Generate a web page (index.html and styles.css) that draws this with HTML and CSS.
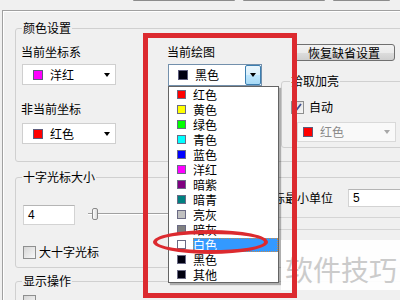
FILE: index.html
```html
<!DOCTYPE html>
<html lang="zh-CN">
<head>
  <meta charset="UTF-8">
  <meta name="viewport" content="width=device-width, initial-scale=1">
  <title>颜色设置</title>
  <link rel="stylesheet" href="styles.css">
</head>
<body>

  <div class="tabs">
    <span class="tab tab-a"></span>
    <span class="tab tab-b"></span>
    <span class="tab tab-c"></span>
  </div>

  <div class="page">
    <fieldset class="group group-color">
      <legend>颜色设置</legend>
      <div class="color-cols">

        <div class="col col-axis">
          <div class="label">当前坐标系</div>
          <div class="combo">
            <span class="swatch c-magenta"></span><span class="combo-text">洋红</span><span class="arrow"></span>
          </div>
          <div class="label label-second">非当前坐标</div>
          <div class="combo combo-second">
            <span class="swatch c-red"></span><span class="combo-text">红色</span><span class="arrow"></span>
          </div>
        </div>

        <div class="col col-draw">
          <div class="label">当前绘图</div>
          <div class="combo-wrap">
            <div class="combo combo-open">
              <span class="swatch c-black"></span><span class="combo-text">黑色</span>
              <span class="drop-btn"><span class="arrow"></span></span>
            </div>
            <ul class="drop-list">
              <li><span class="swatch c-red"></span><span class="item-text">红色</span></li>
              <li><span class="swatch c-yellow"></span><span class="item-text">黄色</span></li>
              <li><span class="swatch c-green"></span><span class="item-text">绿色</span></li>
              <li><span class="swatch c-cyan"></span><span class="item-text">青色</span></li>
              <li><span class="swatch c-blue"></span><span class="item-text">蓝色</span></li>
              <li><span class="swatch c-magenta"></span><span class="item-text">洋红</span></li>
              <li><span class="swatch c-purple"></span><span class="item-text">暗紫</span></li>
              <li><span class="swatch c-teal"></span><span class="item-text">暗青</span></li>
              <li><span class="swatch c-silver"></span><span class="item-text">亮灰</span></li>
              <li><span class="swatch c-gray"></span><span class="item-text">暗灰</span></li>
              <li class="selected"><span class="swatch c-white"></span><span class="item-text">白色</span></li>
              <li><span class="swatch c-black"></span><span class="item-text">黑色</span></li>
              <li><span class="swatch c-black"></span><span class="item-text">其他</span></li>
            </ul>
          </div>
        </div>

        <div class="col col-pick">
          <button class="btn" type="button">恢复缺省设置</button>
          <fieldset class="group group-pick">
            <legend>拾取加亮</legend>
            <div class="check-row">
              <span class="check">
                <svg width="11" height="11" viewBox="0 0 11 11"><path d="M2 5.5 L4.5 8 L9 2" fill="none" stroke="#3d4f8f" stroke-width="1.8"/></svg>
              </span>
              <span>自动</span>
            </div>
            <div class="combo combo-disabled">
              <span class="swatch c-red"></span><span class="combo-text">红色</span><span class="arrow"></span>
            </div>
          </fieldset>
        </div>

      </div>
    </fieldset>

    <fieldset class="group group-cross">
      <legend>十字光标大小</legend>
      <div class="cross-cols">
        <div class="cross-left">
          <div class="size-row">
            <div class="edit">4</div>
            <div class="slider"><span class="track"></span><span class="thumb"></span></div>
          </div>
          <div class="check-row check-big">
            <span class="check"></span>
            <span>大十字光标</span>
          </div>
        </div>
        <div class="cross-right">
          <div class="unit-row">
            <span class="unit-label">光标最小单位</span>
            <div class="edit edit-unit">5</div>
          </div>
          <div class="rule rule-a"></div>
          <div class="rule rule-b"></div>
        </div>
      </div>
    </fieldset>

    <fieldset class="group group-show">
      <legend>显示操作</legend>
      <div class="check-row check-show">
        <span class="check"></span>
      </div>
    </fieldset>
  </div>

  <!-- 标注 -->
  <div class="mark-rect"></div>
  <div class="mark-ellipse"></div>
  <div class="watermark">软件技巧</div>

</body>
</html>
```

FILE: styles.css
```css
body {
  margin: 0;
  width: 400px;
  height: 300px;
  overflow: hidden;
  position: relative;
  background: #f0f0f0;
  color: #000;
  font: 12px/14px "Noto Sans CJK SC", "Liberation Sans", sans-serif;
}

/* 顶部标签页边缘 */
.tabs {
  display: flex;
  height: 10px;
}

.tab {
  height: 1px;
  background: #8c8c8c;
  border-radius: 0 0 2px 2px;
}

.tab-a { margin-left: 133px; width: 102px; }
.tab-b { margin-left: 8px; width: 82px; }
.tab-c { margin-left: 8px; width: 57px; }

.page {
  margin-left: 2px;
  padding-left: 12px;
  border-left: 1px solid #a0a0a0;
  border-top: 1px solid #a0a0a0;
  box-shadow: inset 1px 1px 0 #fff;
  height: 289px;
  overflow: hidden;
}

.group {
  margin: 0;
  padding: 0 0 0 6px;
  border: 1px solid #d0d0d0;
  border-radius: 3px;
  min-width: 0;
  width: 420px;
}

.group legend {
  padding: 0 1px;
  line-height: 14px;
}

.group-color {
  margin-top: 10px;
  padding-bottom: 13px;
}

.color-cols {
  display: flex;
  align-items: flex-start;
}

.col-axis {
  width: 94px;
}

.col-draw {
  width: 94px;
  margin-left: 52px;
}

.col-pick {
  margin-left: 19px;
  width: 160px;
}

.label {
  margin-top: 10px;
  margin-left: -1px;
}

.label-second {
  margin-top: 17px;
}

/* 下拉框 */
.combo {
  display: flex;
  align-items: center;
  box-sizing: border-box;
  height: 21px;
  margin-top: 5px;
  padding-left: 10px;
  background: #fff;
  border: 1px solid #cfcfcf;
}

.combo-second {
  margin-top: 7px;
}

.combo-text {
  margin-left: 7px;
}

.arrow {
  margin-left: auto;
  margin-right: 5px;
  width: 0;
  height: 0;
  border-left: 3px solid transparent;
  border-right: 3px solid transparent;
  border-top: 4px solid #000;
}

.swatch {
  box-sizing: border-box;
  width: 10px;
  height: 10px;
  border: 1px solid #5c5c7c;
  flex-shrink: 0;
}

.c-red { background: #ff0000; }
.c-yellow { background: #ffff00; }
.c-green { background: #00ff00; }
.c-cyan { background: #00ffff; }
.c-blue { background: #0000ff; }
.c-magenta { background: #ff00ff; }
.c-purple { background: #800080; }
.c-teal { background: #008080; }
.c-silver { background: #c0c0c0; }
.c-gray { background: #808080; }
.c-white { background: #ffffff; }
.c-black { background: #000010; }

.combo-wrap {
  position: relative;
  margin-top: 5px;
}

.combo-open {
  height: 22px;
  margin-top: 0;
  padding-left: 9px;
  border-color: #7390ac;
}

.drop-btn {
  display: flex;
  align-items: center;
  justify-content: center;
  box-sizing: border-box;
  width: 16px;
  height: 20px;
  margin-left: auto;
  border: 1px solid #3c7fb1;
  border-radius: 2px;
  background: linear-gradient(#eaf6fd, #d9f0fc 50%, #bee6fd 51%, #a7d9f5);
}

.drop-btn .arrow {
  margin: 0;
}

.drop-list {
  position: absolute;
  z-index: 5;
  top: 22px;
  left: 0;
  box-sizing: border-box;
  width: 111px;
  margin: 0;
  padding: 0;
  list-style: none;
  background: #fff;
  border: 1px solid #646464;
  box-shadow: 2px 2px 1px rgba(0, 0, 0, 0.28);
}

.drop-list li {
  display: flex;
  align-items: center;
  height: 15px;
  padding-left: 8px;
}

.drop-list .swatch {
  width: 9px;
  height: 9px;
  border-color: #6b6b85;
}

.item-text {
  flex: 1;
  margin-left: 7px;
  line-height: 14px;
}

.selected .item-text {
  background: #3399ff;
  color: #fff;
  outline: 1px dotted #c98a4a;
  outline-offset: -1px;
}

/* 右侧 */
.btn {
  display: block;
  box-sizing: border-box;
  width: 102px;
  height: 17px;
  margin: 9px 0 0 12px;
  padding: 0;
  font: inherit;
  line-height: 15px;
  color: #000;
  border: 1px solid #707070;
  border-radius: 3px;
  background: linear-gradient(#f2f2f2, #ebebeb 50%, #dddddd 51%, #cfcfcf);
}

.group-pick {
  margin-top: 13px;
  padding: 0 0 5px 8px;
  width: 160px;
}

.check-row {
  display: flex;
  align-items: center;
  height: 14px;
  gap: 5px;
}

.group-pick .check-row {
  margin-top: 12px;
}

.check {
  display: flex;
  align-items: center;
  justify-content: center;
  box-sizing: border-box;
  width: 13px;
  height: 13px;
  margin-left: 1px;
  border: 1px solid #8e8f8f;
  background: linear-gradient(135deg, #d6d6d6, #f8f8f8);
}

.combo-disabled {
  width: 99px;
  height: 20px;
  margin-top: 8px;
  margin-left: 7px;
  padding-left: 5px;
  background: #f9f9f9;
  border-color: #d9d9d9;
  color: #8a8a8a;
}

.combo-disabled .arrow {
  border-top-color: #a8a8a8;
}

/* 十字光标大小 */
.group-cross {
  margin-top: 8px;
  padding-bottom: 8px;
}

.cross-cols {
  display: flex;
  align-items: flex-start;
}

.cross-left {
  width: 239px;
}

.size-row {
  display: flex;
  align-items: center;
  margin-top: 21px;
}

.edit {
  box-sizing: border-box;
  width: 52px;
  height: 20px;
  margin-left: 1px;
  padding-left: 4px;
  background: #fff;
  border: 1px solid #d3d3d3;
  border-top-color: #b5b5b5;
  font-family: "Liberation Sans", sans-serif;
  line-height: 18px;
}

.slider {
  position: relative;
  width: 160px;
  height: 20px;
  margin-left: 13px;
}

.track {
  position: absolute;
  left: 0;
  right: 0;
  top: 8px;
  height: 1px;
  background: #a0a0a0;
  border-bottom: 1px solid #fff;
}

.thumb {
  position: absolute;
  left: 4px;
  top: 3px;
  box-sizing: border-box;
  width: 6px;
  height: 12px;
  border: 1px solid #8a8a8a;
  border-radius: 2px;
  background: linear-gradient(90deg, #fdfdfd, #dcdcdc);
}

.check-big {
  margin-top: 20px;
  gap: 3px;
}

.cross-right {
  flex: 1;
}

.unit-row {
  display: flex;
  align-items: center;
  margin-top: 5px;
}

.unit-label {
  width: 72px;
}

.edit-unit {
  width: 70px;
  height: 18px;
  margin-left: 15px;
  line-height: 16px;
}

.rule {
  border-bottom: 1px solid #d5d5d5;
}

.rule-a {
  margin-top: 10px;
}

.rule-b {
  margin-top: 11px;
}

/* 显示操作 */
.group-show {
  margin-top: 6px;
  height: 40px;
}

.check-show {
  margin-top: 6px;
}

/* 红色标注与水印 */
.mark-rect {
  position: absolute;
  z-index: 10;
  left: 143px;
  top: 33px;
  box-sizing: border-box;
  width: 154px;
  height: 265px;
  border: 5px solid #dc2a2f;
}

.mark-ellipse {
  position: absolute;
  z-index: 10;
  left: 153px;
  top: 230px;
  box-sizing: border-box;
  width: 115px;
  height: 24px;
  border: 4px solid #dc2a2f;
  border-radius: 50%;
}

.watermark {
  position: absolute;
  z-index: 8;
  left: 281px;
  top: 240px;
  box-sizing: border-box;
  width: 119px;
  height: 50px;
  padding: 15px 0 0 4px;
  background: rgba(255, 255, 255, 0.92);
  color: #cbcbcb;
  font-size: 28px;
  line-height: 28px;
}
```
